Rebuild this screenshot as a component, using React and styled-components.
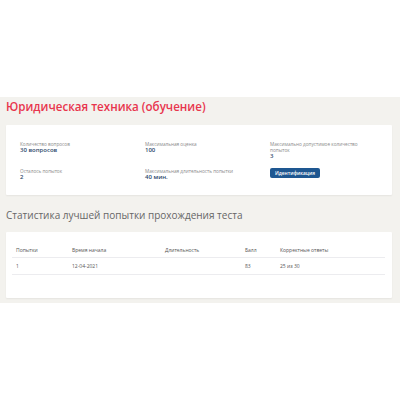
import React from "react";
import styled, { createGlobalStyle } from "styled-components";

const GlobalStyle = createGlobalStyle`
  html, body {
    margin: 0;
    padding: 0;
    background: #ffffff;
    font-family: "Open Sans", "Liberation Sans", sans-serif;
  }
`;

const TopBar = styled.div`
  height: 97px;
  background: #ffffff;
`;

const Main = styled.main`
  background: #f3f2ee;
  padding: 0 8px 5px 6px;
`;

const Title = styled.h1`
  margin: 0;
  padding-top: 2px;
  font-size: 11.6px;
  line-height: 15px;
  font-weight: 600;
  color: #e8354d;
`;

const Card = styled.section`
  background: #ffffff;
  box-shadow: 0 1px 2px rgba(0, 0, 0, 0.06);
  border-radius: 1px;
  margin-top: ${(p) => p.$top || 0}px;
`;

const InfoGrid = styled.div`
  display: grid;
  grid-template-columns: 125px 125px 1fr;
  row-gap: 8px;
  padding: 16px 14px 14px 14px;
  height: 70px;
  box-sizing: border-box;
`;

const Field = styled.div`
  display: flex;
  flex-direction: column;
`;

const Label = styled.span`
  font-size: 4.7px;
  line-height: 6px;
  color: #8a8a8a;
  max-width: 100px;
`;

const Value = styled.span`
  font-size: 6px;
  line-height: 7px;
  font-weight: 600;
  color: #2e4a6c;
`;

const Button = styled.button`
  align-self: flex-start;
  width: 50px;
  height: 10px;
  padding: 0;
  border: none;
  border-radius: 2px;
  background: #1e5791;
  color: #ffffff;
  font-family: inherit;
  font-size: 4.8px;
  font-weight: 600;
  cursor: pointer;
`;

const Heading = styled.h2`
  margin: 13px 0 0;
  font-size: 10px;
  line-height: 14px;
  font-weight: 400;
  color: #666666;
`;

const TableWrap = styled.div`
  padding: 13px 7px 23px 6px;
`;

const Table = styled.table`
  width: 100%;
  border-collapse: collapse;
  font-size: 5px;
  color: #555555;
`;

const Th = styled.th`
  text-align: left;
  font-weight: 400;
  padding: 2px 4px 4px;
  border-bottom: 1.5px solid #ececef;
`;

const Td = styled.td`
  padding: 5px 4px 5px;
  border-bottom: 1.5px solid #ececef;
`;

const columns = [
  { title: "Попытки", width: 56 },
  { title: "Время начала", width: 93 },
  { title: "Длительность", width: 80 },
  { title: "Балл", width: 35 },
  { title: "Корректные ответы" },
];

const rows = [["1", "12-04-2021", "", "83", "25 из 30"]];

export default function App() {
  return (
    <>
      <GlobalStyle />
      <TopBar />
      <Main>
        <Title>Юридическая техника (обучение)</Title>
        <Card $top={11}>
          <InfoGrid>
            <Field>
              <Label>Количество вопросов</Label>
              <Value>30 вопросов</Value>
            </Field>
            <Field>
              <Label>Максимальная оценка</Label>
              <Value>100</Value>
            </Field>
            <Field>
              <Label>Максимально допустимое количество попыток</Label>
              <Value>3</Value>
            </Field>
            <Field>
              <Label>Осталось попыток</Label>
              <Value>2</Value>
            </Field>
            <Field>
              <Label>Максимальная длительность попытки</Label>
              <Value>40 мин.</Value>
            </Field>
            <Field>
              <Button>Идентификация</Button>
            </Field>
          </InfoGrid>
        </Card>
        <Heading>Статистика лучшей попытки прохождения теста</Heading>
        <Card $top={10}>
          <TableWrap>
            <Table>
              <colgroup>
                {columns.map((c) => (
                  <col key={c.title} style={c.width ? { width: c.width } : undefined} />
                ))}
              </colgroup>
              <thead>
                <tr>
                  {columns.map((c) => (
                    <Th key={c.title}>{c.title}</Th>
                  ))}
                </tr>
              </thead>
              <tbody>
                {rows.map((r, i) => (
                  <tr key={i}>
                    {r.map((cell, j) => (
                      <Td key={j}>{cell}</Td>
                    ))}
                  </tr>
                ))}
              </tbody>
            </Table>
          </TableWrap>
        </Card>
      </Main>
    </>
  );
}
